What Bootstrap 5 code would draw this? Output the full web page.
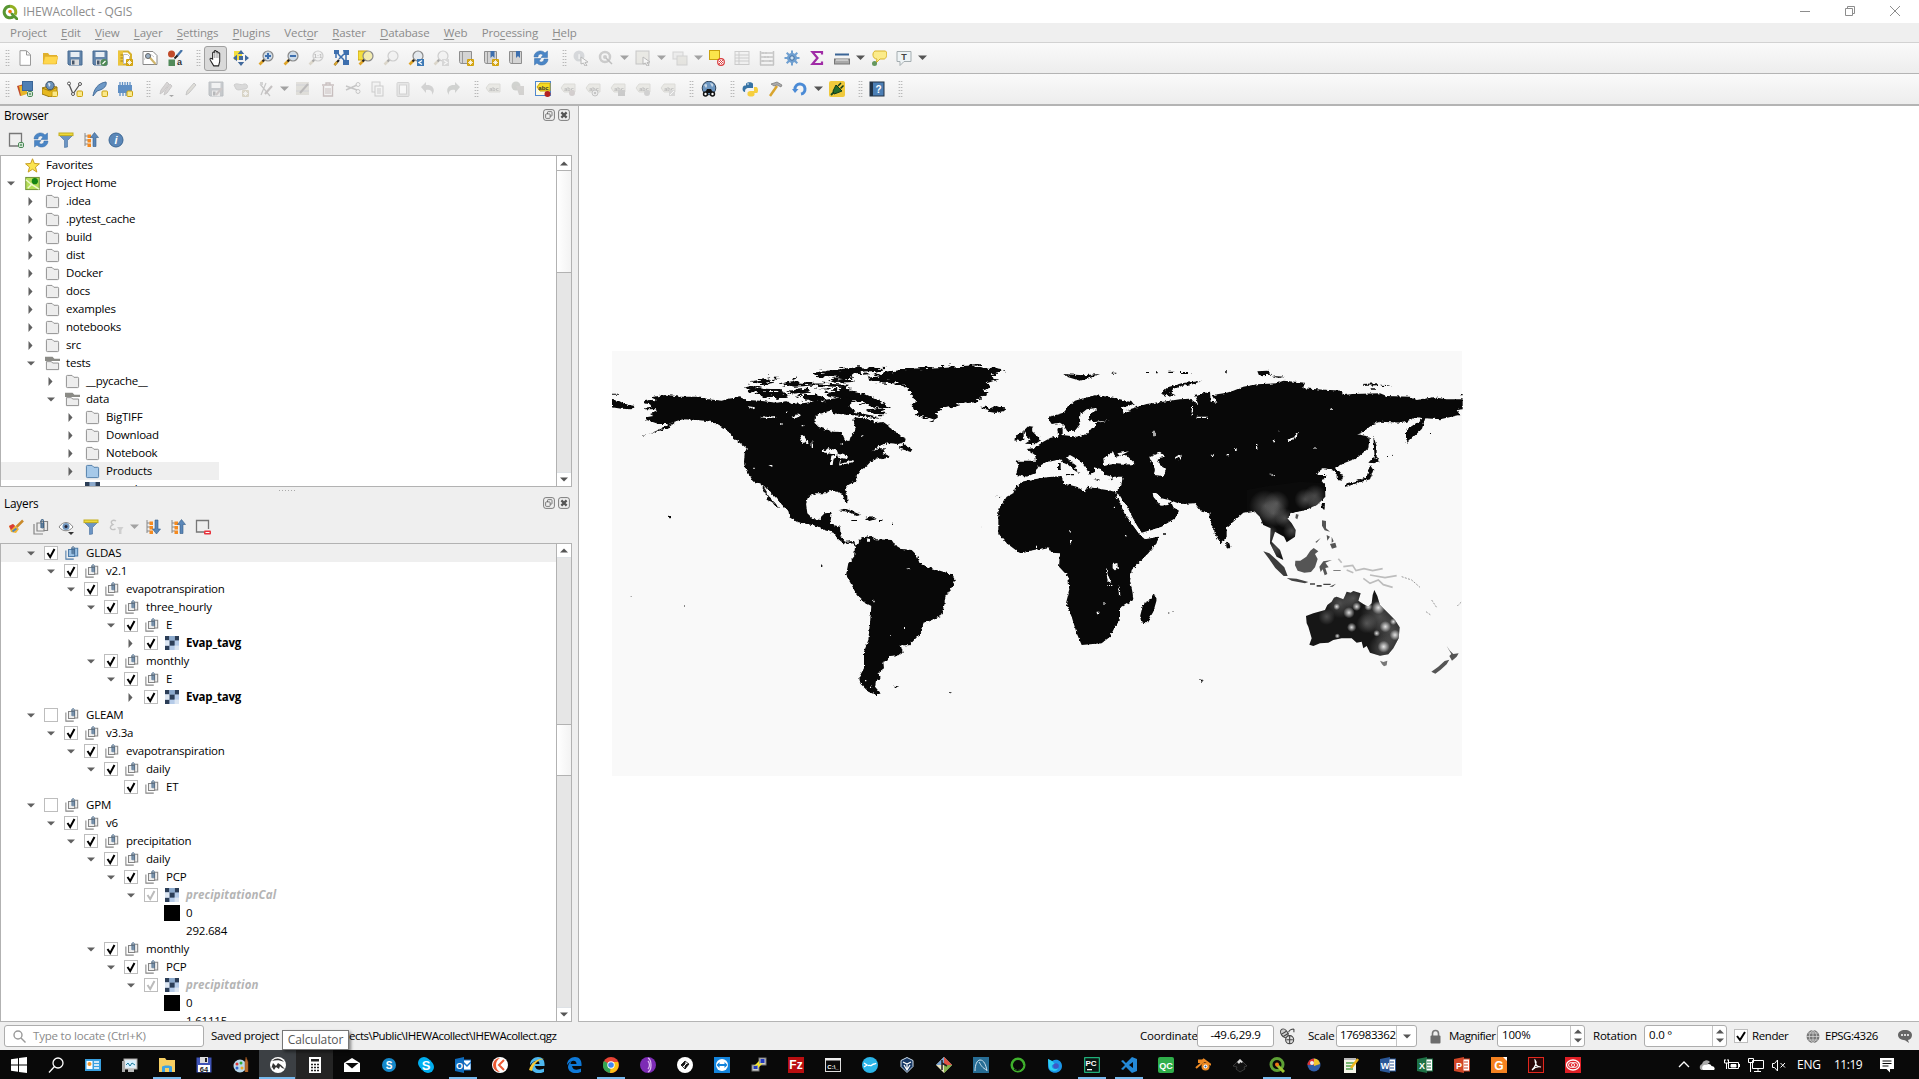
<!DOCTYPE html>
<html lang="en">
<head>
<meta charset="utf-8">
<title>IHEWAcollect - QGIS</title>
<link href="https://cdn.jsdelivr.net/npm/bootstrap@5.3.0/dist/css/bootstrap.min.css" rel="stylesheet">
<style>
body{font-family:"Open Sans","Noto Sans",sans-serif;font-size:11.5px;letter-spacing:-.2px;line-height:18px;color:#000;background:#efefef;width:1919px;height:1079px;overflow:hidden}
svg{display:block;flex:none}
.titlebar{height:23px;background:#fff;color:#8d8d8d;padding-left:2px}
.titlebar .caption{font-size:12px;letter-spacing:-.12px;margin-left:5px}
.winbtn{width:46px}
.menus{height:20px;color:#8b8b8b;border-bottom:1px solid #d2d2d2;padding-left:3px;letter-spacing:-.13px}
.menus span{padding:0 7.1px}
.menus u{text-underline-offset:2px}
.tools{height:31px;background:linear-gradient(#fafafa,#ededed);border-bottom:1px solid #b4b4b4}
.tools.second{height:32px;border-bottom:2px solid #b4b4b4}
.grip{width:15.7px;height:18px;padding-left:8.500px}
.grip.first{width:12.5px;padding-left:5px}
.grip i{display:block;width:5px;height:18px;background-image:radial-gradient(circle,#a8a8a8 .6px,transparent .9px);background-size:2.5px 3px}
.tool{width:25px;height:25px}
.tool.on{border:1px solid #a0a0a0;border-radius:3px;background:#d9d9d9;width:23px;margin:0 1px}
.drop{width:12px}
.off{opacity:.36;filter:grayscale(.75)}
.dock{width:579px;border-right:1px solid #b4b4b4}
.dockhead{height:20px;padding:0 8px 2px 4px;font-size:11.8px}
.dockhead .ctl{gap:3px}
.dockbar{height:30px;padding:0 0 2px 3px}
.treebox{border:1px solid #b2b2b2;background:#fff;width:572px}
.browser-tree{height:332px}
.layer-tree{height:479px}
.node{height:18px;white-space:nowrap}
.node .twist{width:19px}
.node .pic{width:15px}
.node .lbl{margin-left:7px}
.dim{color:#b4b4b4;letter-spacing:.15px}
.sel{background:#efefef}
.sbar{width:15px;border-left:1px solid #b2b2b2;background:#e6e6e6}
.sbar .end{height:14px;background:#fff}
.sbar .thumb{background:linear-gradient(90deg,#fff,#f3f3f3);border-top:1px solid #b2b2b2;border-bottom:1px solid #b2b2b2}
.splitdots{height:7px;padding-left:279px}
.splitdots i{display:block;width:18px;height:1px;margin-top:3px;background:repeating-linear-gradient(90deg,#aaa 0 1px,transparent 1px 3px)}
.mapview{background:#fff;border-bottom:1px solid #b4b4b4;padding:245px 0 0 33px}
.status{height:28px;padding-left:4px}
.field{border:1px solid #adadad;border-radius:3px;background:#fff;height:22px}
.locate{width:200px;color:#8a8a8a}
.path{letter-spacing:-.52px}
.readouts{display:grid;grid-template-columns:57px 77px 26px 36px 81px 32px 48px 88px 59px 83px 25px 52px 21px 68px 26px;align-items:center}
.spin{width:14px;border-left:1px solid #c4c4c4}
.tip{position:absolute;left:282px;top:1030px;width:67px;height:20px;border:1px solid #767676;background:#fff;color:#575757;box-shadow:2px 2px 3px rgba(0,0,0,.45);font-size:12px;letter-spacing:-.1px;z-index:4}
.taskbar{height:29px;background:#090909;color:#fff}
.app{width:37px;height:29px;position:relative}
.app.run::after{content:"";position:absolute;bottom:0;left:5px;width:28px;height:2px;background:#76b9ed}
.app.current{background:#3c4044}
.app.current::after{left:0;width:36px}
.app.hover{background:#242424}
svg text{font-family:"Liberation Sans",sans-serif;font-weight:700;letter-spacing:0}
</style>
<script src="https://cdn.jsdelivr.net/npm/bootstrap@5.3.0/dist/js/bootstrap.bundle.min.js"></script>
</head>
<body class="d-flex flex-column">
<header>
  <div class="titlebar d-flex align-items-center">
    <svg width="16" height="16" viewBox="0 0 16 16"><path d="M8 2.2a5.8 5.8 0 1 0 4.2 9.8" fill="none" stroke="#589632" stroke-width="3"/><path d="M8 2.2a5.8 5.8 0 0 1 5 8.6" fill="none" stroke="#93b023" stroke-width="3"/><path d="M8 8l1 3 5 5h2v-2l-5-5z" fill="#589632"/><circle cx="8" cy="7.6" r="1.8" fill="#ee7913"/></svg>
    <span class="caption">IHEWAcollect - QGIS</span>
    <div class="d-flex ms-auto align-items-center">
      <span class="winbtn"><svg width="46" height="20" viewBox="0 0 46 20"><path d="M19 9.500h10" stroke="#8d8d8d"/></svg></span>
      <span class="winbtn"><svg width="46" height="20" viewBox="0 0 46 20" fill="none" stroke="#8d8d8d"><path d="M18.500 6.500h7v7h-7zM20.500 6.500v-2h7v7h-2"/></svg></span>
      <span class="winbtn"><svg width="46" height="20" viewBox="0 0 46 20"><path d="M17 4l10 10M27 4l-10 10" stroke="#8d8d8d"/></svg></span>
    </div>
  </div>
  <nav class="menus d-flex align-items-center">
    <span>Pro<u>j</u>ect</span><span><u>E</u>dit</span><span><u>V</u>iew</span><span><u>L</u>ayer</span><span><u>S</u>ettings</span><span><u>P</u>lugins</span><span>Vect<u>o</u>r</span><span><u>R</u>aster</span><span><u>D</u>atabase</span><span><u>W</u>eb</span><span>Pro<u>c</u>essing</span><span><u>H</u>elp</span>
  </nav>
  <div class="tools d-flex align-items-center" id="tools1"></div>
  <div class="tools second d-flex align-items-center" id="tools2"></div>
</header>

<main class="d-flex flex-grow-1 overflow-hidden">
  <aside class="dock d-flex flex-column flex-shrink-0">
    <div class="dockhead d-flex align-items-center">Browser<span class="ctl ms-auto d-flex" data-head></span></div>
    <div class="dockbar d-flex align-items-center" id="browserBar"></div>
    <div class="treebox browser-tree d-flex">
      <div class="flex-grow-1 overflow-hidden" id="browserTree"></div>
      <div class="sbar d-flex flex-column"><div class="end d-flex align-items-center justify-content-center" data-up></div><div class="thumb" style="height:103px"></div><div class="end mt-auto border-top d-flex align-items-center justify-content-center" data-down></div></div>
    </div>
    <div class="splitdots"><i></i></div>
    <div class="dockhead d-flex align-items-center">Layers<span class="ctl ms-auto d-flex" data-head></span></div>
    <div class="dockbar d-flex align-items-center" id="layersBar"></div>
    <div class="treebox layer-tree d-flex">
      <div class="flex-grow-1 overflow-hidden" id="layerTree"></div>
      <div class="sbar d-flex flex-column"><div class="end border-bottom d-flex align-items-center justify-content-center" data-up></div><div class="thumb" style="height:52px;margin-top:166px"></div><div class="end mt-auto border-top d-flex align-items-center justify-content-center" data-down></div></div>
    </div>
  </aside>
  <section class="mapview flex-grow-1">
    <svg id="map" width="851" height="426" viewBox="0 0 851 426">
      <defs>
        <filter id="coast" x="0" y="0" width="100%" height="100%" color-interpolation-filters="sRGB"><feTurbulence type="fractalNoise" baseFrequency=".33" numOctaves="2" seed="4" result="n"/><feDisplacementMap in="SourceGraphic" in2="n" scale="3.600" xChannelSelector="R" yChannelSelector="G"/></filter>
        <filter id="arctic" x="0" y="0" width="100%" height="100%" color-interpolation-filters="sRGB"><feTurbulence type="fractalNoise" baseFrequency=".14 .4" numOctaves="2" seed="9" result="n"/><feDisplacementMap in="SourceGraphic" in2="n" scale="9" xChannelSelector="R" yChannelSelector="G"/></filter>
        <radialGradient id="lite"><stop offset="0" stop-color="#fff" stop-opacity=".85"/><stop offset="1" stop-color="#fff" stop-opacity="0"/></radialGradient>
        <radialGradient id="mid"><stop offset="0" stop-color="#888" stop-opacity=".5"/><stop offset="1" stop-color="#888" stop-opacity="0"/></radialGradient>
        <path id="ozShape" d="M978 828L1000 820 1035 810 1042 795 1055 785 1062 773 1070 770 1090 778 1096 765 1100 755 1112 758 1120 753 1142 760 1135 782 1150 792 1165 800 1175 790 1178 765 1183 750 1192 768 1200 795 1225 820 1245 840 1259 862 1256 895 1240 925 1225 943 1200 947 1170 938 1160 918 1150 925 1145 905 1130 908 1115 895 1085 895 1060 900 1045 908 1020 910 1000 918 988 914 995 895 985 860 980 850z"/>
        <path id="seaShape" d="M800 450L850 440 960 425 1035 430 1036 470 1010 495 975 510 930 520 922 535 935 550 947 570 945 590 920 607 912 590 885 575 880 590 875 605 900 630 910 660 890 650 870 610 872 565 850 555 840 530 822 512 800 515z"/>
        <clipPath id="ozClip"><use href="#ozShape"/></clipPath>
        <clipPath id="seaClip"><use href="#seaShape"/></clipPath>
      </defs>
      <rect width="850" height="425" fill="#f9f9f9"/>
      <!-- western hemisphere -->
      <g filter="url(#arctic)"><rect width="851" height="426" fill="none"/><g transform="translate(-12 -11) scale(.33333)" fill="#080808">
        <path d="M425 145l30-8 40 12 45 2 30 14-35 12-50-8-20-12zM445 125l50-8 30 8-40 8zM500 112l40 2-10 6zM540 130l40-6 60 4 20 8-80 4zM560 152l60-6 10 12-50 6zM590 165l60 0 30 15-50 6zM640 130l110 4-20 10-70-2zM635 98l40-4 50 6-30 10-50-2zM680 92l90-10 95 2-40 12-60 4-20 16-60-4zM690 118l60-6 15 10-60 4zM675 152l60-4 60 14 40 18 35 20-20 8-40-10-30-14-60-10-40-8zM700 182l30-4 10 12-30 6zM800 210l30-6 25 10 5 12-30 0zM570 112l20 0-5 8z"/>
        <path d="M800 111L850 100 910 88 1010 82 1130 76 1160 82 1222 92 1190 98 1175 110 1190 120 1160 130 1175 142 1150 150 1160 162 1145 172 1145 182 1100 187 1060 200 1030 204 1015 215 1003 243 985 236 960 232 945 212 935 195 945 180 935 160 920 145 905 132 860 128 820 126z"/>
      </g></g>
      <g filter="url(#coast)"><rect width="851" height="426" fill="none"/><g transform="translate(-12 -11) scale(.33333)" fill="#080808">
        <path d="M36 180l20 2 18 10 30 6-10 10-30-2-28-4zM36 161h18v3h-18zM1144 200l16 0 6 6 22-8 10 2 18 2-2 10-26 7-22-4-2-6-18-4z"/>
        <path d="M132 184L150 180 172 181 152 172 200 164 240 170 300 170 325 178 365 182 385 176 420 172 440 180 480 182 530 188 560 184 575 192 620 188 650 180 670 184 690 196 700 205 690 212 680 215 655 222 645 232 643 248 655 260 675 268 700 275 725 276 735 300 748 303 752 290 768 265 760 240 765 232 800 238 820 240 822 250 850 246 870 260 880 275 895 280 905 290 917 296 915 305 895 312 870 310 850 313 825 325 815 335 840 325 855 325 848 340 862 345 870 352 845 358 840 352 812 365 800 378 780 392 770 405 772 420 745 435 735 448 742 468 742 490 736 488 728 462 710 455 690 452 680 460 650 460 625 468 618 490 622 520 640 537 662 540 672 520 695 518 690 552 720 560 722 590 735 605 762 603 768 615 765 622 760 610 745 612 730 610 712 595 700 578 672 570 650 558 620 552 590 545 568 532 565 512 545 495 525 470 505 455 495 440 480 430 460 425 448 405 435 385 432 365 434 340 440 325 415 305 400 295 385 275 365 260 345 250 320 243 290 240 250 238 232 242 205 252 175 252 165 248 140 240 138 232 160 228 150 222 170 215 168 208 132 208 134 203 155 200 150 193 132 190z"/>
        <path d="M670 180L740 170 762 180 745 195 765 215 830 230 835 236 790 228 745 225 700 220z"/>
        <path d="M895 325l18-15 8 10 16 8-5 8-18-6zM715 510l22-4 25 10 22 9-14 3-25-12zM795 535l15-6 18 8-20 6zM205 252l28-10-30 22-55 18 40-18zM130 286l6 2-6 3zM485 440l8 0 12 30 20 18 12 16-10-3-10-14-14-8-2-12z"/>
        <path d="M765 622L778 603 788 592 812 588 830 598 875 600 885 615 905 627 935 630 950 645 958 668 985 682 1020 692 1055 703 1065 720 1060 735 1036 770 1032 800 1022 828 990 842 970 850 965 875 945 898 928 916 902 916 908 935 895 946 870 948 862 962 850 965 852 985 836 997 842 1012 828 1022 825 1040 842 1060 830 1066 805 1055 780 1030 778 1010 792 985 792 935 805 900 810 850 814 798 790 785 770 765 755 735 738 705 745 670 762 650z"/>
        <path d="M882 1037l16 2-14 4zM1050 1055l6 4-5 1zM206 528l7 0 0 7-5 0zM664 672l4 6-5 0zM1186 465l4 3-4 1zM1200 470l4 3-4 1zM1144 560l3 3-4 0zM757 540h14v3h-14zM838 540h9v3h-9zM876 551h3v4h-3z"/>
        <path d="M92 768h3v3h-3zM252 795h3v3h-3z" fill="#888"/>
        <g fill="#f9f9f9"><path d="M660 335l25-10 25 5 5 12-20 0zM690 375l4-28 15-4 15 0 20 6-6 8-14-3-4 18 40-12 2 5-45 12 4-22-8-6-12 4-3 22zM600 288l8-3 18 22-4 4-8-8-6 8zM480 232l50-4-12 8zM505 375l12 0 0 6zM440 198l25 4-4 6zM575 230l25-8 2 5-20 10zM800 595l10 2 0 8-6 0zM918 686l12-2-2 4zM495 442l20 20 38 40-10-2-30-30z"/>
        <path d="M540 250h5v4h-5zM605 255h5v4h-5zM590 220h5v5h-5zM725 310h4v4h-4zM820 782h4v5h-4zM868 885h4v4h-4zM635 305h4v18h-4zM912 864h3v3h-3zM795 1020h4v4h-4zM810 1038h4v4h-4zM558 215h6v4h-6zM785 286h5v4h-5zM460 383h4v4h-4z"/></g>
      </g></g>
      <!-- eastern hemisphere -->
      <g filter="url(#coast)"><rect width="851" height="426" fill="none"/><g transform="translate(368 -11) scale(.33333)" fill="#080808">
        <path d="M108 362L168 362 165 345 140 327 160 325 175 315 190 305 212 293 235 290 232 268 248 262 248 285 290 290 320 283 335 265 345 262 345 250 390 241 345 246 328 240 325 225 350 212 350 205 330 215 297 232 302 250 285 272 262 274 250 255 240 248 215 252 207 240 208 230 250 218 270 195 285 182 320 172 345 166 385 170 430 180 465 190 445 198 422 202 430 215 450 208 500 192 560 184 600 178 630 176 650 190 655 192 645 165 690 155 692 185 712 188 698 165 740 158 760 152 790 140 830 133 890 130 910 122 975 128 970 145 1010 148 1085 152 1090 165 1120 162 1200 160 1220 168 1290 170 1310 180 1360 172 1400 178 1448 178 1448 208 1430 210 1440 225 1380 238 1335 235 1310 232 1270 248 1200 245 1180 252 1150 275 1132 283 1170 290 1165 325 1130 355 1095 368 1065 385 1080 395 1090 410 1085 422 1070 420 1070 400 1055 388 1030 385 1008 400 1015 405 1040 405 1025 425 1035 440 1035 470 1010 495 975 510 930 520 922 535 850 555 840 530 822 512 790 518 760 545 740 562 740 590 722 612 705 580 690 540 688 520 665 515 645 490 600 492 575 482 545 475 530 460 518 458 520 470 542 497 565 495 572 482 580 502 597 512 585 535 545 560 485 578 470 555 445 515 425 485 408 460 415 445 425 430 428 410 400 410 375 405 365 388 345 382 345 395 330 405 318 385 300 362 270 345 258 352 290 378 285 385 298 400 285 392 265 375 250 368 240 358 225 362 200 365 175 380 165 400 140 410 108 405 115 375z"/>
        <path d="M105 445L125 425 160 418 200 412 245 408 250 430 290 440 315 455 320 440 380 450 405 455 410 470 430 510 455 550 480 585 495 598 535 590 530 610 505 640 455 690 450 720 458 760 460 780 420 805 420 840 405 860 390 890 365 910 305 915 290 880 275 830 258 790 268 750 265 710 237 680 240 640 215 638 205 622 150 632 118 638 80 610 55 580 55 510 80 470 100 460z"/>
        <path d="M480 830L490 790 510 780 522 762 530 780 520 815 500 850 485 848zM145 258l15 2-5 12 15 15 15 12-20 14-30-2 18-12-15-12-8-14zM115 280l16-4 0 18-8 10-22-4zM234 370h8v20h-8zM258 402h24v4h-24zM340 418l20 2-5 3zM385 418l18-3-8 6zM738 605l10 5 4 14-12 2z"/>
        <path d="M250 102l60 4 50-4-30 12-30 8-40-12zM395 98h14v3h-14zM498 96h10v3h-10zM525 94h8v6h-8zM565 95h18v4h-18zM600 96h34v3h-34zM735 94h6v3h-6zM543 160l20-18 42-12 58-7-20 8-38 7-26 10-8 10 16 8-20 4zM832 94l30-2 15 12-40 2zM875 108l40 2-20 4zM1146 132l45-2 0 6-40 2zM1200 134l38 2-30 3zM1172 145h16v4h-16zM1448 162h-8v4h8z"/>
        <path d="M1278 270l30-20 30-22-12 38-42 40-6-10zM1180 288l10 30 0 35-6 0-2-30zM1165 368l15-16 22 10-20 8zM1170 375l10 15-10 28-35 10-40 14 5-12 40-10 20-10zM1275 312l6-5 0 3zM1233 344h4v3h-4zM1221 348h3v3h-3zM1350 279h3v3h-3zM552 580l6 0 0 4-6 0zM565 818l4 2-4 1zM578 813l4 2-4 1zM660 1017l12 6-8 2zM1025 492l10 0-2 18-8-6z"/>
        <g fill="#f9f9f9"><path d="M370 355L390 342 400 336 405 350 440 346 466 372 430 374 400 372 372 378zM412 340l35-6-28 14zM508 352L540 338 555 350 530 356 540 372 558 386 552 408 522 405 525 388zM585 352l12-8 8 4-4 12-6-8-8 6zM692 345l14-4-8 10zM918 300l24-8 12-18-4 18-22 12zM398 672l14-3 2 16-10 6-6-6zM380 680l2 20 12 30-10-6-6-24zM415 740h4l2 28h-4zM410 462l8 2 28 45 38 75-6-2-45-62zM335 395l8 5-4 5zM320 208l30-4-22 20-25 15-3-15z"/>
        <path d="M880 302h5v5h-5zM828 312h4v18h-4zM735 342h12v4h-12zM765 328h5v5h-5zM520 275h4v14h-4zM892 270h4v4h-4zM865 398l20 8v3zM1052 205h4v4h-4zM1003 322h4v4h-4zM268 570h5v5h-5zM270 600h4v10h-4zM350 815h8v5h-8zM370 790h4v4h-4zM400 500h5v4h-5zM435 585h4v4h-4zM170 616h4v8h-4zM635 198h4v30h-4zM650 230h34v4h-34zM385 735h12v3h-12zM428 210l25 2-22 10z"/></g>
      </g></g>
      <g transform="translate(368 -11) scale(.33333)">
        <g filter="url(#coast)"><use href="#seaShape" fill="#0b0b0b"/></g>
        <g clip-path="url(#seaClip)" fill="url(#mid)"><circle cx="855" cy="498" r="48"/><circle cx="880" cy="520" r="42"/><circle cx="975" cy="478" r="32"/><circle cx="1005" cy="468" r="34"/><circle cx="935" cy="572" r="26"/><circle cx="890" cy="490" r="38"/><circle cx="1015" cy="500" r="32"/><circle cx="915" cy="535" r="30"/><circle cx="885" cy="625" r="40"/><circle cx="870" cy="580" r="25"/></g>
        <g filter="url(#coast)"><g fill="#555"><path d="M850 634l18 6 25 22 20 20 10 26-12 0-25-24-18-26z" fill="#3c3c3c"/><path d="M946 662l15 0 18-12 12-18 10-8 14 10-10 8 8 15-8 25-12 14-20 2-20-6-8-16z"/><path d="M920 714l30 2 35 10-10 4-40-8zM990 730h15v4h-15zM1010 735h15v5h-15zM1030 731h22v4h-22zM1048 740l20-9-10 9z" fill="#444"/><path d="M1018 680l12-16 26-4-20 8 10 14-10 2 6 18-8 4-6-18-6 8zM1060 690h22v2h-22z"/><path d="M1026 541l12 2 0 22 12 10-16-4-8-14zM1040 585l10 5-8 12zM1055 590l6 14-6 4zM1050 612l16-4 4 14-14 4zM1006 606l16-12-12 14zM948 522l8 2-4 14-6-4z"/></g>
        <g fill="none" stroke="#bdbdbd" stroke-width="5"><path d="M1075 656l10 12M1090 680l28-4 10 16 24-6 26 6 30-6M1150 715l20 15 25-10 15 14 28 8M1170 705l45 8 35-6M1100 690l20 8"/><path d="M1265 710l30 10 25 22M1355 780l16 24M1338 815l14 10M1432 798l12-12" stroke="#999" stroke-width="3" stroke-dasharray="6 4"/></g>
        <use href="#ozShape" fill="#161616"/></g>
        <g clip-path="url(#ozClip)"><g fill="url(#mid)"><circle cx="1080" cy="790" r="45"/><circle cx="1120" cy="775" r="35"/><circle cx="1200" cy="830" r="60"/><circle cx="1240" cy="880" r="60"/><circle cx="1210" cy="925" r="45"/><circle cx="1160" cy="850" r="30"/><circle cx="1040" cy="830" r="25"/></g><g fill="url(#lite)"><circle cx="1195" cy="803" r="20"/><circle cx="1107" cy="818" r="17"/><circle cx="1130" cy="800" r="13"/><circle cx="1115" cy="862" r="14"/><circle cx="1216" cy="860" r="17"/><circle cx="1211" cy="920" r="18"/><circle cx="1165" cy="800" r="12"/><circle cx="1245" cy="885" r="16"/><circle cx="1072" cy="888" r="8"/><circle cx="1190" cy="880" r="10"/><circle cx="1070" cy="800" r="10"/><circle cx="1240" cy="845" r="10"/></g></g>
        <path d="M1200 962l10 4 12-4-2 14-8 3-6-6z" fill="#777"/><g filter="url(#coast)"><path d="M1354 995l20-14 20-18 14-4-8 14-18 16-16 12zM1400 918l10 14 10 10 16-2-6 10-14 12-8-14 6-6z" fill="#555"/></g>
      </g>
    </svg>
  </section>
</main>

<footer>
  <div class="status d-flex align-items-center">
    <div class="field locate d-flex align-items-center">
      <svg style="margin:0 7px 0 8px" width="13" height="13" viewBox="0 0 13 13" fill="none" stroke="#999" stroke-width="1.400"><circle cx="5" cy="5" r="4"/><path d="M8 8l4.500 4.500"/></svg><span>Type to locate (Ctrl+K)</span>
    </div>
    <span style="margin-left:7px;width:138px;letter-spacing:-.35px">Saved project</span><span class="path">ects\Public\IHEWAcollect\IHEWAcollect.qgz</span>
    <div class="readouts ms-auto">
      <span>Coordinate</span><span class="field text-center">-49.6,29.9</span>
      <svg class="mx-auto" width="16" height="17" viewBox="0 0 15 16" fill="none" stroke="#444"><ellipse cx="5" cy="5" rx="3" ry="4.500" transform="rotate(-35 5 5)" fill="#ccc"/><path d="M2 6l5-3M4 8l5-3M9 4c1-3 3-3 5-3M14 1v3"/><circle cx="10" cy="11" r="3.800" fill="#ddd"/><path d="M7 11h6M10 7v8"/></svg>
      <span style="padding-left:8px">Scale</span><span class="field d-flex"><span class="flex-grow-1 text-nowrap" style="padding-left:3px;letter-spacing:-.4px">176983362</span><span class="spin d-flex align-items-center justify-content-center" style="width:20px" data-down></span></span>
      <svg style="margin-left:12px" width="13" height="15" viewBox="0 0 12 15"><path d="M3 7V4.500a3 3 0 0 1 6 0V7" fill="none" stroke="#777" stroke-width="1.600"/><rect x="1" y="6.500" width="10" height="8" rx="1" fill="#6c6c6c"/></svg>
      <span style="letter-spacing:-.5px">Magnifier</span><span class="field d-flex"><span class="flex-grow-1 ps-1">100%</span><span class="spin d-flex flex-column justify-content-evenly align-items-center" data-both></span></span>
      <span class="ps-2">Rotation</span><span class="field d-flex"><span class="flex-grow-1 ps-1">0.0 °</span><span class="spin d-flex flex-column justify-content-evenly align-items-center" data-both></span></span>
      <svg style="margin-left:7px" width="14" height="14" viewBox="0 0 14 14"><rect x=".5" y=".5" width="13" height="13" fill="#fff" stroke="#bdbdbd"/><path d="M3 7l3 4 5-8" fill="none" stroke="#000" stroke-width="2"/></svg>
      <span style="letter-spacing:-.4px">Render</span>
      <svg width="18" height="15" viewBox="0 0 18 15"><circle cx="9" cy="7.500" r="6.500" fill="#777"/><path d="M2 7.500h14M9 1v13M4 4h10M4 11h10M9 1c-5 4-5 9 0 13M9 1c5 4 5 9 0 13" fill="none" stroke="#ddd" stroke-width=".7"/></svg>
      <span style="letter-spacing:-.5px">EPSG:4326</span>
      <svg class="ms-1" width="16" height="15" viewBox="0 0 16 15"><path d="M8 1c4 0 7 2 7 5s-2 4.500-4 5l1 3-4-2.800C4 11 1 9 1 6s3-5 7-5z" fill="#666"/><path d="M4 6h2M7 6h2M10 6h2" stroke="#fff" stroke-width="1.500"/></svg>
    </div>
  </div>
  <div class="taskbar d-flex align-items-center">
    <div class="d-flex" id="apps"></div>
    <div class="d-flex align-items-center ms-auto" style="width:242px">
      <svg width="14" height="16" viewBox="0 0 14 16"><path d="M2 10l5-5 5 5" fill="none" stroke="#fff" stroke-width="1.300"/></svg>
      <svg style="margin-left:8px" width="18" height="16" viewBox="0 0 18 16"><path d="M2 13a3.500 3.500 0 0 1 1-6 4.500 4.500 0 0 1 8-2l-7 6 11-1a3 3 0 0 1-1 3z" fill="#aaa"/><path d="M4 13a3 3 0 0 1 3-5c2-2 5-1 5.500 1 3 0 4 3 2.500 4z" fill="#fff"/></svg>
      <svg style="margin-left:6px" width="18" height="16" viewBox="0 0 18 16" fill="none" stroke="#fff"><path d="M5.500 5.500h10v6h-10zM16.500 7v3M1.500 3v3h4V3M3.500 6v6M2 2v2M5 2v2"/><path d="M8 7.500h5v2.500H8z" fill="#fff"/></svg>
      <svg style="margin-left:6px" width="18" height="16" viewBox="0 0 18 16" fill="none" stroke="#fff"><path d="M5.500 3.500h11v8h-11zM11 12v2.500M7 14.500h7M1.500 1.500h5v4h-5zM3.500 6v9" /></svg>
      <svg style="margin-left:5px" width="17" height="16" viewBox="0 0 17 16" fill="none" stroke="#fff"><path d="M2.500 6.500h2l3-3.500v11l-3-3.500h-2zM10.500 6l4.500 4.500M15 6l-4.500 4.500"/></svg>
      <span style="margin-left:10px;width:37px;font-size:12px">ENG</span><span style="width:45px;font-size:12px;letter-spacing:-.5px">11:19</span>
      <svg width="16" height="16" viewBox="0 0 16 16"><path d="M1 1h14v11h-4v3.500L7.500 12H1z" fill="#fff"/><path d="M3.500 4h9M3.500 6.500h9M3.500 9h6" stroke="#090909"/></svg>
    </div>
  </div>
</footer>
<div class="tip text-center">Calculator</div>

<script>
const B='#5b87b8', D='#555';
const svg=(s,w=16,h=16,c='')=>`<svg class="${c}" width="${w}" height="${h}" viewBox="0 0 16 16">${s}</svg>`;
const P=(d,f='none',s='none',w=1)=>`<path d="${d}" fill="${f}" stroke="${s}" stroke-width="${w}"/>`;
const C=(x,y,r,f,s='none',w=1)=>`<circle cx="${x}" cy="${y}" r="${r}" fill="${f}" stroke="${s}" stroke-width="${w}"/>`;
const R=(x,y,w,h,f,s='none',r=0)=>`<rect x="${x}" y="${y}" width="${w}" height="${h}" fill="${f}" stroke="${s}" rx="${r}"/>`;
const T=(x,y,t,z,f)=>`<text x="${x}" y="${y}" font-size="${z}" fill="${f}" text-anchor="middle">${t}</text>`;
const star=R(9,9,7,7,'#d2a20c','none',1)+P('M12.500 10v5M10 12.500h5M10.800 10.800l3.400 3.400M14.200 10.800l-3.400 3.400','none','#fff',.8);
const newb=R(10,10,5.5,5.5,'#fbe98a','#caa20f',1), plus=R(10.5,10.5,5,5,'#fff','#4a8a55',1.500)+P('M13 11.500v3M11.500 13h3','none','#4a8a55');
const lens=(f='#cfdce8')=>P('M6 10l-4.500 4.500','none','#e0a528',2.6)+P('M6.500 9.500l-2 2','none','#222',2)+C(10,6,5,f,'#8a8a8a',1.200);
const book=P('M1.500 1.500h12v12H4c-2 0-2.500-1-2.500-2z','#d4d4d4','#8e8e8e')+P('M4.500 2v11','none','#999');
const page=P('M3 .700h6.500l4 4V15.300H3z','#fff','#999')+P('M9.500 1v4H13','none','#999');
const floppy=P('M1 1h14v14H2l-1-1z','#6385ab','#466a92')+R(3.5,2,9,5,'#e8eef4')+R(4,9.500,8,5.5,'#dcdcdc')+R(5,10.500,2.500,4,'#46566a');
const tag=P('M1 7l3-4h11v8H4z','#d9d5a8','#b5b08a')+T(9,9.500,'abc',5.5,'#555');
const pencil=P('M3 14l1-4 7-8 2 2-7 8z','#c9b57a','#777');
const refresh=P('M1 7c0-6 8-8 11-4l2.500-2v6.500H8l2-2.500C8 3 5 4 5 7zM15 9c0 6-8 8-11 4l-2.500 2V8.500H8L6 11c2 2 5 1 5-2z','#4b86c6','#3a6ea8',.5);
const tree=P('M2 1v13M2 4h3M2 8h3M2 12h3','none','#888')+R(4.5,2.500,3.5,3.5,'#f58a1f')+R(4.5,7,3.5,3.5,'#f58a1f')+R(4.5,11.500,3.5,3.5,'#f58a1f');
const funnel=P('M1 3h14L9.500 8.500V15l-3 .5v-7z','#6a94c4','#446d9c',.6)+R(1,1,14,2.600,'#ecd93b','#c3ad1f');
const I={
 new:page, open:P('M1 3h5l1.500 2H15v9H1z','#e0b02c')+P('M1 14L3 6.500h13l-2 7.500z','#ffd74d','#e5b431',.6), save:floppy, saveas:floppy+C(12,12.500,3.500,'#4f8a55')+P('M10.500 14l3-3','none','#fff',1.200),
 layout:P('M2 1.500h9l3 3v10H2z','#fff','#d7b12c',2)+R(1,1,5,14,'#ecc53c')+P('M3.500 5h2.500M3.500 8h2.500M3.500 11h2.500','none','#a58011')+P('M6.500 4.500h4l2 2v7h-6z','#fff','#bbb')+star, layman:P('M1 1.500h10l4 4v9H1z','#fff','#888')+P('M2 10c4-8 7-6 10-3','none','#ccc')+P('M6.500 6l7 8','none','#d0b56a',2)+C(6,6,2.500,'#9bb0c4','#666'),
 style:C(4.500,4,3.5,'#c14b2a')+P('M10 6l5-6','none','#4674a8',2.2)+P('M7.500 8.500l3-3','none','#222',2)+R(1.500,9.500,6.500,6.500,'#528a5a')+T(12.5,15,'a',9,'#333'),
 hand:P('M5 9V3.500c0-1 1.500-1 1.500 0V2c0-1 1.600-1 1.600 0v1c0-1 1.600-1 1.600 0v1c0-1 1.600-1 1.600 0V11l-1 4H6l-3-5c-1-2 .5-2 1-1.500z','#fff','#222',.9)+P('M6.500 3v5M8.100 3v5M9.700 4v4','none','#555',.5),
 pan:R(1,1,8,9,'#f2dd3e')+P('M8 0l3.200 4H4.800zM8 16l3.200-4H4.800zM0 8l4-3.200v6.400zM16 8l-4-3.200v6.400zM6 6h4v4H6z','#41699c'),
 zin:lens()+P('M10 3v6M7 6h6','none','#3d6fae',2), zout:lens()+P('M7 6h6','none','#3d6fae',2), z11:lens('#eee')+T(10,8.300,'1:1',6,'#555'),
 zfull:P('M1 0h5v4H1zM10 0h6v5h-5zM10 10h6v5h-6z','#3d6fae')+P('M5 4l6 6M11 4L6 9','none','#3d6fae',1.600)+P('M3 3v5M13 4v7','none','#3d6fae',1.500)+P('M6 10l-4.500 5','none','#222',2)+P('M4 12l-2.500 3','none','#d9a52f',2.400), zsel:R(0,1,9,9,'#f4df3c','#caa20f')+lens('#f3ecb0'), zlay:lens('#eee'),
 zlast:lens('#e4e9ee')+R(9,9,7,7,'#3d79b5')+P('M14 10.500l-3 2 3 2','none','#fff',1.400), znext:lens('#eee')+R(9,9,7,7,'#aaa')+P('M11 10.500l3 2-3 2','none','#fff',1.400),
 bm1:book+star, bm2:book+P('M7.500 1h4v7l-2-2-2 2z','#3d6fae')+star, bm3:book+P('M8 1h4v7l-2-2-2 2z','#3d6fae'), refresh,
 ident:C(6,6,5.500,'#8fa9c7')+T(6,9,'i',8,'#fff')+P('M8 7l7 5-3 .5 2 3-2 .5-1.500-3L8 14z','#fff','#555'), act:C(7,7,5,'none','#888',2.500)+C(7,7,2,'#888')+P('M8 8l6 6','none','#666',1.500),
 sel:R(1,1,13,13,'#ddd6a4','#777')+P('M8 7l7 5-3 .5 2 3-2 .5-1.500-3L8 14z','#fff','#555'), selv:R(1,2,10,7,'#ddd','#999')+R(5,6,10,9,'#d5cfa0','#999'),
 desel:R(.5,.5,10,9,'#fbe54b','#caa20f')+C(12,12,3.300,'#fff','#d8383a',1.200)+P('M9.800 14.200l4.400-4.400M10 11l3 3M11 10l3 3','none','#d8383a',.9), table:R(1,1.500,14,13,'#eee','#888')+P('M1 5h14M1 8h14M1 11h14M5 2v12','none','#888'), abac:P('M1.500 1v14M14.500 1v14M1 3h14M1 7h14M1 11h14M1 15h14M4 2v2M7 2v2M6 6v2M9 6v2M4 10v2M11 10v2','none','#777',1.500),
 gear:C(8,8,5,'#6f9fd0')+P('M8 .5v15M.5 8h15M2.700 2.700l10.600 10.600M13.300 2.700L2.700 13.300','none','#6f9fd0',2)+C(8,8,2.200,'#cfe0f0','#3e6da0'), sigma:P('M13 4.500V2H3.500l5 6-5 6H13v-2.500','none','#a02ba6',2.200), meas:P('M1 4.500h14','none','#3b6596',2)+R(.5,9,15,5,'#a9a9a9','#777')+P('M3 9v2M5 9v2M7 9v2M9 9v2M11 9v2M13 9v2','none','#eee'),
 tip:P('M4 1h10c3 0 2 8-1 8H9l-4 4 1-4C1 9 1 2 4 1z','#fbeb8a','#d8b42a')+C(3.500,13.500,2.500,'#65965e'), txt:P('M1 1.500h14v10H8l-4 4v-4H1z','#eef3f5','#a4adb0')+T(8,9.500,'T',9,'#444'),
 dsm:P('M0 5l7-2 3 9-7 3z','#c14b2a')+P('M2 5l8-1v9l-6 2z','#e8b62a')+R(5.5,.5,10,9,'#4f7fb4','#3a6597')+plus, gpkg:P('M0 7l7-2 8 1v7l-7 3-8-3z','#e6b81f','#9b7a12')+P('M0 7l8 3 7-4','none','#9b7a12')+C(8,4.500,4.2,'#6a91b9','#456')+P('M6 2c3 0 3 2 1 4','#dfe9f2')+newb,
 shp:P('M1.500 2l4.500 11 7-10','none','#555',1.300)+C(2,2.500,1.500,'#fff','#555')+C(13,3,1.500,'#fff','#555')+C(6,13,1.500,'#fff','#555')+newb, feather:P('M1 15C2 8 6 2 14 1c1 3-1 7-9 9z','#6c98c6','#476f9c')+newb, chip:R(1,4,14,8,'#5f8fc4')+P('M3 1v3M5.500 1v3M8 1v3M10.500 1v3M13 1v3M3 12v3M6 12v3M9 12v3','none','#5f8fc4',1.300)+newb,
 ed2:P('M2 13l1-4 6-8 2 2-6 8zM6 14l1-4 5-7 2 2-5 7z','#b99','#877')+P('M11 14h5l-2.500 2z','#222'), pencil, sved:floppy+P('M8 14l6-7','none','#a77',2), addf:P('M1 4c3-3 6 1 10-1 4-1 5 5 1 5-3 0-7 2-9 0z','#aaa','#888')+star, vtx:P('M2 3l10 12M3 14L8 2','none','#777',1.200)+R(2,1,3,3,'#999')+P('M14 5l-7 8','none','#866',2),
 mod:R(1,1,13,13,'#c9bd8a')+P('M1 4h13M1 10h13','none','#aaa',2)+P('M5 12l8-9','none','#655',2), trash:P('M2 4h12M6 4V2h4v2M3.500 5v10h9V5','none','#b55',1.400)+P('M6 7v6M8 7v6M10 7v6','none','#b55'), cut:P('M1 5l11 4M1 9l11-5','none','#777',1.400)+C(13,3.500,2,'none','#777')+C(13,10.500,2,'none','#777'),
 copy:R(2,1,8,10,'#eee','#888')+R(5,5,8,10,'#f4f4f4','#888')+P('M7 8h4M7 10h4M7 12h4','none','#888'), paste:R(2,1.500,12,14,'#ccc','#999',1)+R(4.500,4,7,9,'#fff','#999'), undo:P('M1 6l5-5v3c7-1 10 5 6 10 1-4-2-6-6-5v3z','#999'), redo:P('M15 6l-5-5v3C3 3 0 9 4 14c-1-4 2-6 6-5v3z','#8a9a8a'),
 tag, pie:C(6,5,4.500,'#8a9a7a')+P('M6 5h8v9H9z','#a98'), tagp:R(.5,.5,15,14,'#fffbe0','#4f86cf')+P('M2 6l3-4h10v8H5z','#f5d922','#c5a60f')+T(8.5,8.500,'abc',6,'#333')+C(12.5,13,3,'#b32121'), tag1:tag+C(12,12,3,'#b88'), tag2:tag+C(10,12,3,'#ddd','#777')+C(10,12,1,'#555'), tag3:tag+R(8,9,7,6,'#888'), tag4:tag+C(12,12,3,'#999'), tag5:tag+R(9,9,6,6,'#aaa')+P('M10 14l4-4','none','#fff'),
 globe:C(8,7,6.800,'#6d96c0','#2d4157')+P('M3 4c3-3 4 1 2 3M9 2c4 0 4 3 2 4','#c7d8e6')+C(4.500,13,2.700,'#111')+C(11.500,13,2.700,'#111')+P('M4 12l2-4h4l2 4','#111')+C(4.5,13,1.200,'#fff')+C(11.5,13,1.200,'#fff'),
 py:P('M4 8V3c0-2.500 7-2.500 7 0v4H6c-2 0-3 1-3 4-3.500 0-3-6.500 0-6.500h5','#3673a5')+P('M12 6v4H8.500c-2 0-3 1-3 2v2c1 2 6 2 7 0v-2h2c2 0 2-5 0-6z','#f6cf3f')+C(6,3,.8,'#fff'), ham:P('M3 15l7-10','none','#d9a52f',2.500)+P('M4 3l6-2 5 3-1 2-4-2-3 1z','#aaa','#666',.6), rot:P('M3 8a5 5 0 1 1 6 5','none','#4b8bd6',3)+P('M0 8h6.500L3 12z','#4b8bd6'), plug:R(0,0,16,16,'#efc93c','none',2)+P('M2 14l3-3','none','#1b4d21',2)+P('M4 10l3-6 6 6-5 2-3 1z','#236b2c','#123b17')+P('M9 5l3-3M11.500 7.500l3-3','none','#123b17',1.500), help:R(1,1,14,14,'#4c7fb5','#234')+R(1,1,3,14,'#223346')+T(9.500,12,'?',10,'#fff'),
 addl:P('M10 14H1.500V1.500h12V10','none','#777',1.300)+plus, funnel, col:tree+P('M11.500 .5l4 5H13v9h-3v-9H7.500z',B,'#345c87',.6), exp:tree+P('M11.500 15l4-5H13V1h-3v9H7.500z',B,'#345c87',.6), info:C(8,8,7,B,'#3c6795')+'<text x="8" y="12" font-size="11" fill="#fff" text-anchor="middle" font-style="italic">i</text>',
 brush:P('M8.500 8l6.500-6.500','none','#c98a2b',2.500)+P('M1 7l4-2 6 5-3 4-5-1z','#f2b431')+P('M1 7l4-2 2 2-4 4z','#d83b3b')+P('M4.500 12.500l4-3','none','#4e86c0',2), grp:P('M1 5v10h9','none','#858585',1.200)+P('M4 12V4h7v8zM11 2.500h3.500v9H11M7 2.500h4','#efefef','#858585',1.200)+P('M8 9V2.500c0-2.500 2.500-2.500 2.500 0V9M9.200 4v5.500','none','#3f6488',1.100),
 eye:P('M1 8c4-6 10-6 14 0-4 5-10 5-14 0z','#fff','#888')+C(8,7.500,3.500,'#6f95bd')+C(8,7.500,1.500,'#223')+P('M10 13h6l-3 3z','#333'), eps:P('M8 2C5 0 1 3 5 5.500 0 8 3 12 7.500 10','none','#777',1.400)+P('M9 8h6.500l-2 3v4h-2.500v-4z','#999'), rem:P('M9 13H1.500V1.500h12V10','none','#777',1.300)+R(9,11.500,7,4,'#e8323c','none',1)+P('M10.500 13.500h4','none','#fff')
};
const arrow=(c='#555')=>`<svg width="9" height="6" viewBox="0 0 9 6"><path d="M0 .5h9L4.500 5z" fill="${c}"/></svg>`;
function bar(id,spec){document.getElementById(id).innerHTML=spec.split(' ').map((k,i)=>{
  if(k==='|')return `<span class="grip ${i?'':'first'}"><i></i></span>`;
  if(k==='v'||k==='-v')return `<span class="drop d-flex justify-content-center">${arrow(k==='v'?'#555':'#a2a2a2')}</span>`;
  const off=k[0]==='-'; const n=k.replace(/[-*]/,'');
  return `<span class="tool d-flex align-items-center justify-content-center ${k[0]==='*'?'on':''}">${svg(I[n],n==='hand'?18:16,n==='hand'?18:16,off?'off':'')}</span>`}).join('')}
bar('tools1','| new open save saveas layout layman style | *hand pan zin zout -z11 zfull zsel -zlay zlast -znext bm1 bm2 bm3 refresh | -ident -act -v -sel -v -selv -v desel -table -abac gear sigma meas v tip txt v');
bar('tools2','| dsm gpkg shp feather chip | -ed2 -pencil -sved -addf -vtx -v -mod -trash -cut -copy -paste -undo -redo | -tag -pie tagp -tag1 -tag2 -tag3 -tag4 -tag5 | globe | py ham rot v plug | help |');
bar('browserBar','addl refresh funnel col info');
bar('layersBar','brush grp eye funnel -eps -v exp col rem');

const up='<svg width="8" height="5" viewBox="0 0 8 5"><path d="M0 4.500h8L4 .5z" fill="#555"/></svg>', down='<svg width="8" height="5" viewBox="0 0 8 5"><path d="M0 .5h8L4 4.500z" fill="#555"/></svg>';
document.querySelectorAll('[data-up]').forEach(e=>e.innerHTML=up);
document.querySelectorAll('[data-down]').forEach(e=>e.innerHTML=down);
document.querySelectorAll('[data-both]').forEach(e=>e.innerHTML=up+down);
document.querySelectorAll('[data-head]').forEach(e=>e.innerHTML=svg(R(.8,.8,14.400,14.400,'none',D,3)+R(6,3.500,6,6,'none',D,1)+R(3.500,6.500,6,6,'#efefef',D,1),12,12)+svg(R(.8,.8,14.400,14.400,'none',D,3)+P('M4.500 4.500l7 7M11.500 4.500l-7 7','none',D,3),12,12));

const twist={o:'<svg width="8" height="5" viewBox="0 0 8 5"><path d="M0 .5h8L4 4.500z" fill="#606060"/></svg>',c:'<svg width="5" height="9" viewBox="0 0 5 9"><path d="M.5 0v9l4-4.500z" fill="#606060"/></svg>','':''};
const fold=(f,s)=>P('M1.500 2.500q0-1 1-1h5l2 2h4q1 0 1 1v9q0 1-1 1h-11q-1 0-1-1z',f,s);
const raster=R(0,0,16,16,'#b5cbe8')+R(0,0,5,5,'#2c3e57')+R(11,0,5,5,'#2c3e57')+R(5,5,6,6,'#2c3e57')+R(0,11,5,5,'#2c3e57')+R(5,0,6,5,'#8ba9cc')+R(11,11,5,5,'#dce6f2')+R(0,5,5,6,'#dce6f2');
const pics={star:P('M8 .8l2 5 5.400.4-4.200 3.500 1.400 5.300L8 12l-4.600 3 1.400-5.300L.6 6.200 6 5.800z','#fbe44e','#c49a1c'),home:R(.8,1.500,14.400,13,'#b6df59','#6a8d2f')+P('M1 4l6 5 8 5M3 13l5-5','none','#eef8cf',1.500)+C(10.500,5.500,3.300,'#148414'),
 f:fold('#ededed','#8b8b8b'),b:fold('#a6c9e9','#4d7ba8'),fo:P('M0 .8h8l2 2h6v2.500H0z','#8b8b86')+P('M1.500 6h5l2 1.500h6v7h-13z','#ededed','#8b8b8b'),g:I.grp,gb:I.grp.replace('#efefef','#9cc2e4').replaceAll('#858585','#4d7ba8'),r:raster,k:R(0,0,16,16,'#000')};
const browser=[[0,'','star','Favorites'],[0,'o','home','Project Home'],...['.idea','.pytest_cache','build','dist','Docker','docs','examples','notebooks','src'].map(n=>[1,'c','f',n]),[1,'o','fo','tests'],[2,'c','f','__pycache__'],[2,'o','fo','data'],[3,'c','f','BigTIFF'],[3,'c','f','Download'],[3,'c','f','Notebook'],[3,'c','b','Products'],[3,'','r','sample']];
browserTree.innerHTML=browser.map(([l,t,p,n])=>`<div class="node d-flex align-items-center ${p==='b'?'sel':''}" style="padding-left:${l*20}px;${p==='b'?'width:218px':''}"><span class="twist d-flex justify-content-center">${twist[t]}</span><span class="pic" style="margin-left:5px">${svg(pics[p],15,15)}</span><span class="lbl" style="margin-left:6px">${n}</span></div>`).join('');
const mark=c=>`<svg width="14" height="14" viewBox="0 0 14 14"><rect x=".5" y=".5" width="13" height="13" fill="#fff" stroke="#bdbdbd"/>${c?`<path d="M3.500 7l2.700 4 4.300-8" fill="none" stroke="${c}" stroke-width="2"/>`:''}</svg>`;
const L=[[1,'o',1,'gb','GLDAS'],[2,'o',1,'g','v2.1'],[3,'o',1,'g','evapotranspiration'],[4,'o',1,'g','three_hourly'],[5,'o',1,'g','E'],[6,'c',1,'r','Evap_tavg'],[4,'o',1,'g','monthly'],[5,'o',1,'g','E'],[6,'c',1,'r','Evap_tavg'],[1,'o',0,'g','GLEAM'],[2,'o',1,'g','v3.3a'],[3,'o',1,'g','evapotranspiration'],[4,'o',1,'g','daily'],[5,'',1,'g','ET'],[1,'o',0,'g','GPM'],[2,'o',1,'g','v6'],[3,'o',1,'g','precipitation'],[4,'o',1,'g','daily'],[5,'o',1,'g','PCP'],[6,'o',2,'r','precipitationCal'],[6,'',3,'k','0'],[6,'',4,'','292.684'],[4,'o',1,'g','monthly'],[5,'o',1,'g','PCP'],[6,'o',2,'r','precipitation'],[6,'',3,'k','0'],[6,'',4,'','1.61115']];
layerTree.innerHTML=L.map(([l,t,c,p,n])=>{const q=`padding-left:${l*20}px`;
 if(c>2)return `<div class="node d-flex align-items-center" style="${q}"><span style="width:43px"></span><span style="width:22px">${p?svg(pics[p]):''}</span><span>${n}</span></div>`;
 const cls=p==='r'?(c===2?'fw-bold fst-italic dim':'fw-bold'):'';
 return `<div class="node d-flex align-items-center ${p==='gb'?'sel':''}" style="${q}"><span class="twist d-flex justify-content-center">${twist[t]}</span><span style="margin:0 7px 0 4px">${mark(['','#000','#bbb'][c])}</span><span style="width:14px">${svg(pics[p],14,14)}</span><span class="lbl ${cls}">${n}</span></div>`}).join('');

const sq=(bg,t,f='#fff',z=9)=>R(0,0,16,16,bg)+T(8,11.500,t,z,f);
const office=(c,t)=>P('M0 2l10-2v16L0 14z',c)+R(9,2,6.500,12,'#fff',c)+P('M10 5h4M10 8h4M10 11h4','none',c,1.200)+T(5,11.500,t,9,'#fff');
const edge=c=>P('M1 8C1 3 5 0 9 0c5 0 7 4 6.500 9H6c1 5 6 4 9 2.500V15C9 18 2 15 2 10c0-3 2-5 4-6-1 1-1.500 2-1.500 3h6c0-5-6-4-9.500 1z',c);
const A=[
 P('M0 2.300l7-1v6.200H0zM8 1.100L16 0v7.500H8zM0 8.500h7v6.200l-7-1zM8 8.500h8V16l-8-1.100z','#fff'),
 C(10,6,5,'none','#fff',1.300)+P('M6.500 9.500L1 15.500','none','#fff',1.300),
 R(0,2,16,12,'#39a0e0')+R(1.500,4,6,8,'#fff')+C(4.500,7,2,'#f29a2e')+P('M9 5h5M9 8h5M9 11h5','none','#fff',1.500),
 R(2,2,13,10,'#e8e8e8','#aaa')+R(3.500,3.500,10,7,'#d8f0ff')+P('M4 8l2-2 2 3 2-3 3 2','none','#1c7a9a')+R(6,12,6,3,'#bbb')+R(0,4,3,11,'#aaa'),
 P('M0 1h6l1.500 2H16v12H0z','#f7cf63')+P('M3 15v-5c0-2 10-2 10 0v5h-3v-4H6v4z','#3ea2e5'),
 R(.5,.5,15,15,'#3f53b5')+R(4,0,8,6,'#ddd')+R(9,1,2,4,'#222')+R(2,8,12,7,'#fff')+T(8,14.500,'64',7.500,'#222'),
 C(7,9,6.500,'#b9d7ea')+C(4,7,1.500,'#d33')+C(8,6,1.500,'#3a3')+C(4,11,1.500,'#36c')+C(9,11,1.500,'#ea2')+P('M12 15V5l1-5 2 5v10','#b66b2b','#8a4a1c',.5),
 C(8,8,8,'#fff')+P('M1 12l2-6 3 3 2-3 3 2 4 4-3-1-2-2-1 3-3-2-2 3-2-3zM2 4c4-4 9-3 12 1-4-2-8-2-12-1z','#333'),
 R(2,0,12,16,'#fff')+R(4,2,8,2.500,'#222')+P('M4 7.500h8M4 10.500h8M4 13.500h8','none','#222',1.500)+P('M6.500 6v9M9.500 6v9','none','#fff'),
 P('M0 6l8-5 8 5v9H0z','#fff')+P('M1.500 6h13L8 11.500z','#090909'),
 C(8,8,7,'#1589cb')+T(8,11.500,'S',10,'#fff'), C(6,6,6,'#00aff0')+C(10,10,6,'#00aff0')+C(8,8,6.500,'#00aff0')+T(8,12.500,'S',13,'#fff'),
 R(7,3,9,10,'#fff','#1673c8')+P('M8 5l4 4 4-4','none','#1673c8',1.500)+P('M0 2l9-2v16l-9-2z','#0f6cbd')+T(4.500,11.500,'O',9,'#fff'),
 C(8,8,8,'#fff')+P('M8 1a7 7 0 1 0 0 14c-3-2-4-4-4-7s1-5 4-7z','#ec5a35')+P('M12 3L7 8l5 5','none','#ec5a35',2),
 edge('#4db7ef')+P('M0 13C2 6 9 1 15 2c-5 0-11 5-12 12z','#f5c933'), edge('#0e79d8'),
 C(8,8,8,'#e84335')+P('M8 8L1 4a8 8 0 0 0 6 12z','#34a553')+P('M8 8l-1 8a8 8 0 0 0 8-11H8z','#fbc116')+C(8,8,3.700,'#fff')+C(8,8,2.800,'#4285f4'),
 C(8,8,8,'#7d2bb5')+P('M8 1c4 2 4 12 0 14M8 4c2 2 2 6 0 8','none','#dcb9ef',1.300),
 C(8,8,8,'#fff')+P('M4 8l4-4v3l-2 2zM12 7l-4 5V9l2-2zM8 4l4 3M4 8l4 4','#111','#111',.8),
 R(0,0,16,16,'#1384dc')+C(8,8,6,'#fff')+P('M2.500 8l3-3v2h5V5l3 3-3 3V9h-5v2z','#1384dc'),
 R(1,8,7,6,'#ccc','#777')+R(8,1,7,7,'#ccc','#777')+R(9.500,2,4,4,'#233bbd')+R(2.5,9,4,3,'#233bbd')+P('M3 9l5-5v3l4-1-5 5V8z','#f3e52a'),
 sq('#b90e10','Fz','#fff',12), R(.5,1.500,15,13,'#0a0a0a','#ddd')+R(0,1,16,2.500,'#eee')+T(8,11.500,'C:\\_',6,'#fff'), C(8,8,8,'#2bb5e8')+P('M2 6l3 2-3 2M6 9c1-2 2 1 4-1s3 0 4-2','none','#fff',1.300),
 P('M8 .5l6 3v6l-6 6-6-6v-6z','#193a66','#cfe0f0')+P('M4 5l4 2 4-2M8 7v6M5 8l3 5 3-5','none','#fff',1.200), P('M8 0l8 8-8 8-8-8z','#e9e3c1')+P('M8 0l8 8H8z','#e05145')+P('M0 8l8-8v8z','#7aa5d8')+P('M8 8h8l-8 8z','#83b34a')+P('M6 3v10M6 6l5 3','none','#222',1.500),
 R(0,0,16,16,'#276d95')+P('M2 14c0-6 2-11 5-11 4 0 6 5 7 11M6 5c2 3 3 6 8 8','none','#cfe3ef'), C(8,8,6.300,'none','#3faf2c',2.500)+P('M4 12c4 3 8 1 9-4','none','#0a0a0a'),
 P('M1 2l4 2c5-3 10 0 10 5 0 9-14 9-14 0z','#1b95e8')+P('M1 2l4 2 3 3-3 1c-1 4 4 5 6 3 0 4-9 4-9-1z','#2fd0f2')+C(9,9,2.800,'#3f58c5'),
 R(.7,.7,14.600,14.600,'#0a1512','#27d795')+T(7,8.500,'PC',8,'#fff')+R(3,12,5,1.300,'#fff'), P('M11 0l5 2v12l-5 2-6-6-3 3-2-1 4-4-4-4 2-1 3 3zM12 5L8 8l4 3z','#2489d8'), R(0,0,16,16,'#2fae4a','none',2)+T(8,11.500,'QC',9,'#fff'),
 P('M1 11l7-6H4V3.500h5L8 2l8 6','none','#ee8a24',2)+C(10.500,9.500,4,'#ee8a24')+C(10.500,9.500,2,'#fff')+C(10.500,9.500,1,'#2a5d9c'),P('M8 2l7 7-3 1 1 2-5 3-4-3 1-2-4-1z','#111','#555',.6)+P('M5 5l3-3 3 3-1.500 1-1-1-1.500 2z','#ddd'),
 C(8,7.500,6,'none','#5da035',3)+P('M8 8l7 7','none','#9cc531',3)+C(8,7.5,2,'#ee7913'), C(8,8,6.500,'#315da8')+P('M1.500 8A6.500 6.500 0 0 1 8 1.500V8z','#d33')+P('M8 1.500A6.500 6.500 0 0 1 14 7l-6 2z','#f0c52f')+C(6,6,2,'#eee'), R(1,2,12,14,'#f4f4e8')+R(1,1,12,2,'#bbb')+P('M3 6h8M3 9h6M3 12h7','none','#51a34b',1.500)+P('M8 11l7-9','none','#edb51b',2.500),
 office('#2b5797','W'),office('#1e7145','X'),office('#d04526','P'), R(0,0,16,16,'#f58220')+P('M12 0h4v4z','#fff')+T(8,12.5,'G',12,'#fff'), R(.5,.5,15,15,'#2a0707','#e2261c')+P('M4 13c4-4 5-8 3-10 0 5 2 7 6 7-4-1-7 1-9 3z','none','#fff',1.100), R(0,0,16,16,'#df1f26')+'<ellipse cx="8" cy="8" rx="6.500" ry="5" fill="none" stroke="#fff" stroke-width="1.300"/><ellipse cx="6.500" cy="8" rx="3" ry="2.500" fill="none" stroke="#fff"/><ellipse cx="9.500" cy="8" rx="3" ry="2.500" fill="none" stroke="#fff"/>'
];
const running=[4,7,12,16,29,30,34];
apps.innerHTML=A.map((s,i)=>`<span class="app d-flex align-items-center justify-content-center ${running.includes(i)?'run':''} ${i===7?'current':''} ${i===8?'hover':''}">${svg(s)}</span>`).join('');
</script>
</body>
</html>
